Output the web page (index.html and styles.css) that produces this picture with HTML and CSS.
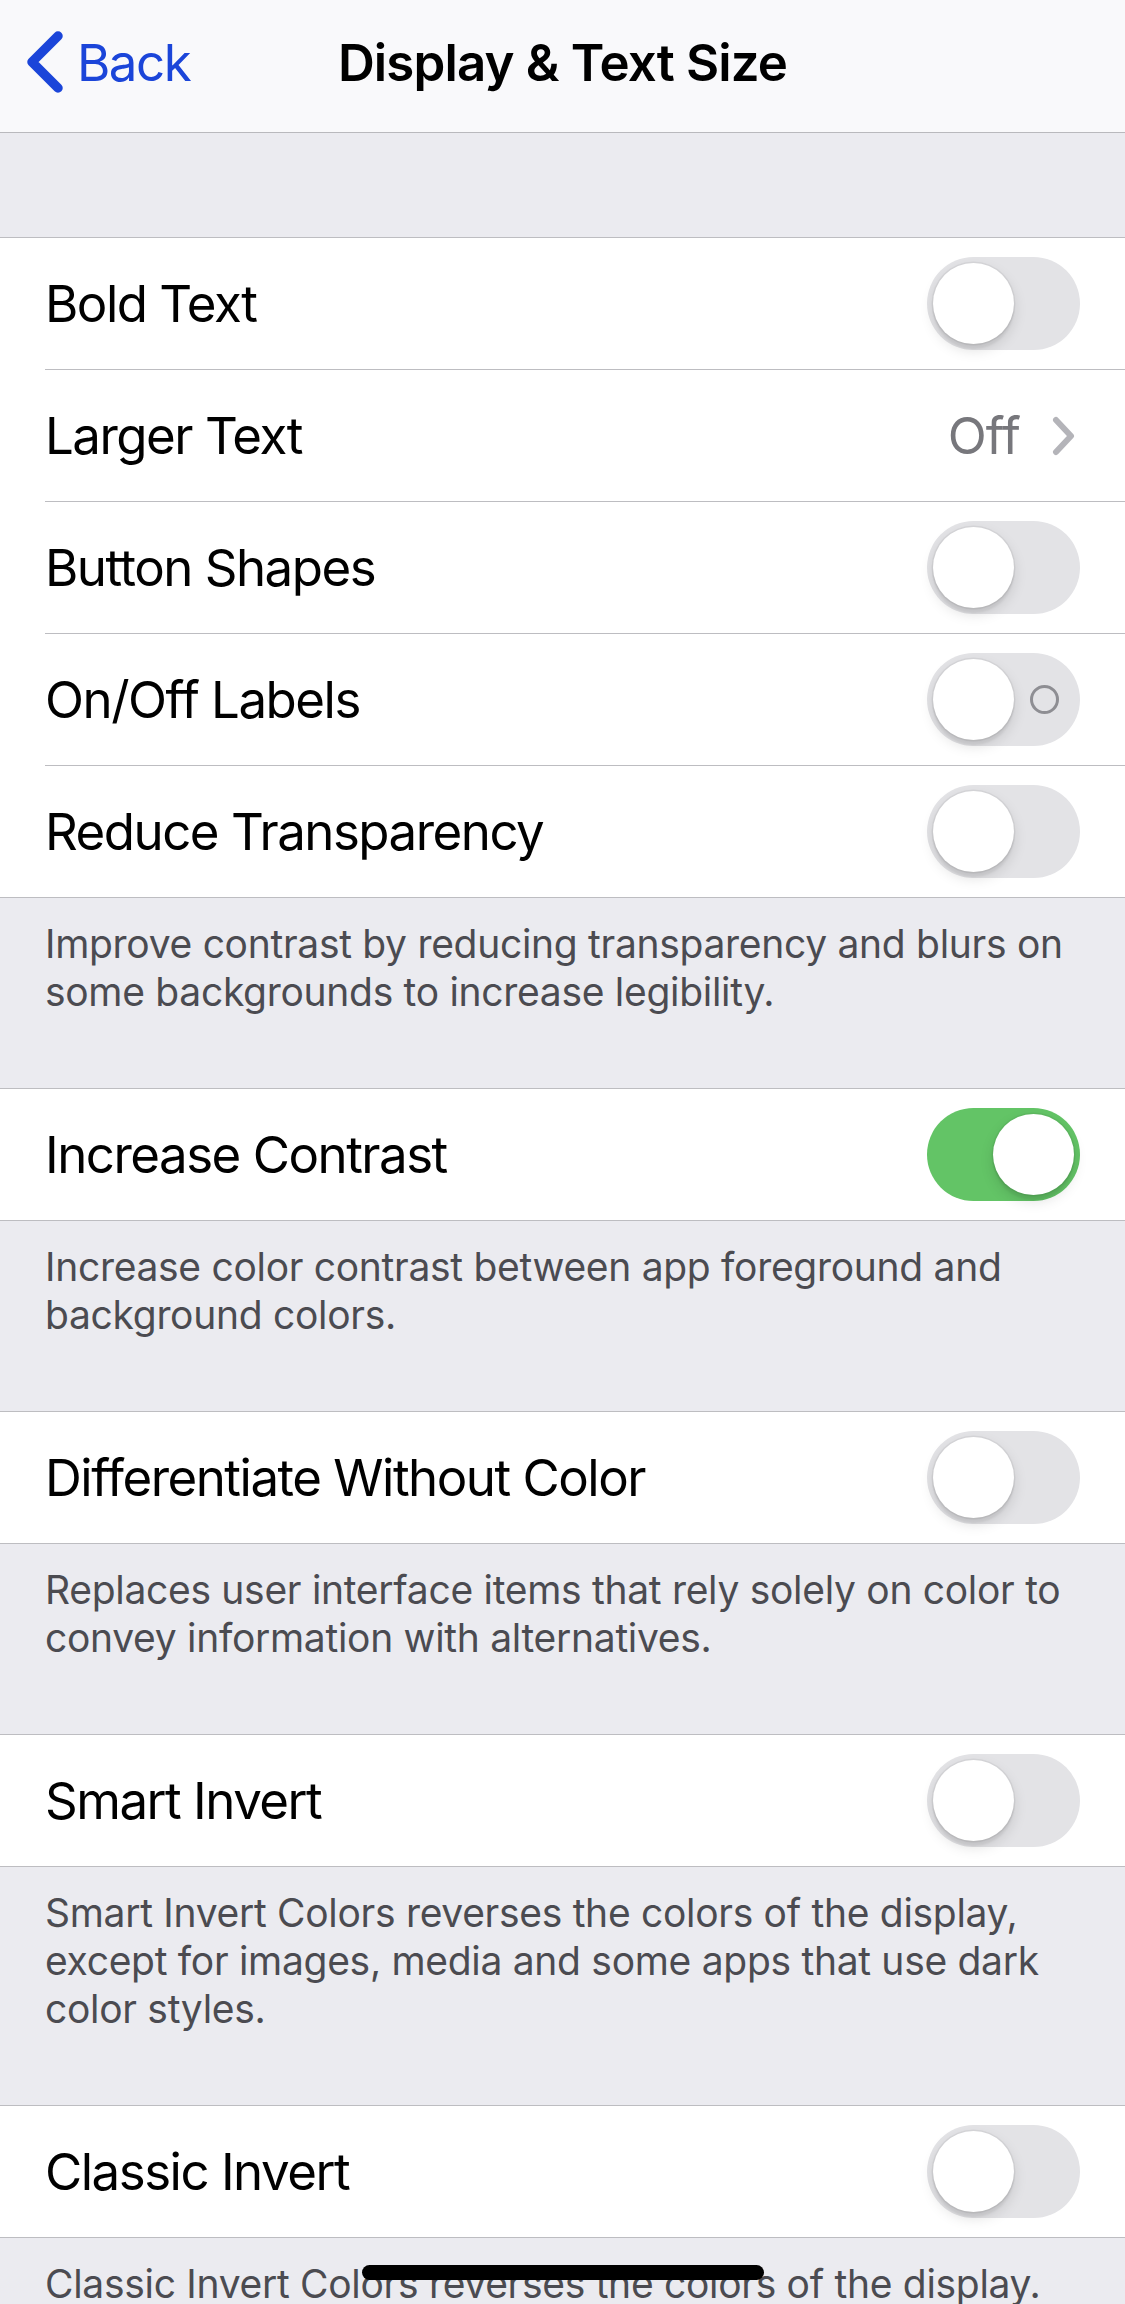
FILE: index.html
```html
<!DOCTYPE html>
<html lang="en">
<head>
<meta charset="utf-8">
<title>Display &amp; Text Size</title>
<link rel="stylesheet" href="styles.css">
</head>
<body>
<div class="screen">
  <header class="nav">
    <div class="back">
      <svg class="back-chevron" width="40" height="66" viewBox="0 0 40 66"><path d="M34 7 L8 33 L34 59" fill="none" stroke="#1b45d9" stroke-width="9.5" stroke-linecap="round" stroke-linejoin="round"/></svg>
      <span class="back-label">Back</span>
    </div>
    <h1 class="nav-title">Display &amp; Text Size</h1>
  </header>

  <div class="top-gap"></div>

  <section class="group">
    <div class="row"><span class="label">Bold Text</span><span class="toggle"><span class="knob"></span></span></div>
    <div class="row"><span class="label">Larger Text</span><span class="detail">Off</span><svg class="chevron" width="24" height="40" viewBox="0 0 24 40"><path d="M4 4 L19 20 L4 36" fill="none" stroke="#b4b4b9" stroke-width="6" stroke-linecap="round" stroke-linejoin="round"/></svg></div>
    <div class="row"><span class="label">Button Shapes</span><span class="toggle"><span class="knob"></span></span></div>
    <div class="row"><span class="label">On/Off Labels</span><span class="toggle"><span class="knob"></span><span class="ring"></span></span></div>
    <div class="row"><span class="label">Reduce Transparency</span><span class="toggle"><span class="knob"></span></span></div>
  </section>
  <p class="footer">Improve contrast by reducing transparency and blurs on some backgrounds to increase legibility.</p>

  <section class="group">
    <div class="row"><span class="label">Increase Contrast</span><span class="toggle on"><span class="knob"></span></span></div>
  </section>
  <p class="footer">Increase color contrast between app foreground and background colors.</p>

  <section class="group">
    <div class="row"><span class="label">Differentiate Without Color</span><span class="toggle"><span class="knob"></span></span></div>
  </section>
  <p class="footer">Replaces user interface items that rely solely on color to convey information with alternatives.</p>

  <section class="group">
    <div class="row"><span class="label">Smart Invert</span><span class="toggle"><span class="knob"></span></span></div>
  </section>
  <p class="footer">Smart Invert Colors reverses the colors of the display, except for images, media and some apps that use dark color styles.</p>

  <section class="group">
    <div class="row"><span class="label">Classic Invert</span><span class="toggle"><span class="knob"></span></span></div>
  </section>
  <p class="footer">Classic Invert Colors reverses the colors of the display.</p>

  <div class="home-indicator"></div>
</div>
</body>
</html>
```

FILE: styles.css
```css
* { box-sizing: border-box; }

html, body {
  margin: 0;
  padding: 0;
}

body {
  background: #ebebf0;
  font-family: "Inter", "Noto Sans", sans-serif;
  color: #000;
}

.screen {
  position: relative;
  width: 1125px;
  height: 2304px;
  overflow: hidden;
  background: #ebebf0;
}

.nav {
  height: 133px;
  background: #f9f9fb;
  border-bottom: 1px solid #b9b9bd;
  position: relative;
  display: flex;
  align-items: center;
}

.back {
  display: flex;
  align-items: center;
  padding-left: 24px;
  height: 100%;
  padding-bottom: 8px;
}

.back-chevron {
  display: block;
}

.back-label {
  font-size: 51px;
  color: #1b45d9;
  margin-left: 13px;
  letter-spacing: -1.5px;
}

.nav-title {
  position: absolute;
  left: 0;
  right: 0;
  top: 0;
  height: 124px;
  margin: 0;
  display: flex;
  align-items: center;
  justify-content: center;
  font-size: 51px;
  font-weight: 600;
  letter-spacing: -0.85px;
}

.top-gap {
  height: 104px;
}

.group {
  background: #fff;
  border-top: 1px solid #bdbdc1;
  border-bottom: 1px solid #bdbdc1;
}

.row {
  height: 131px;
  margin-left: 45px;
  padding-right: 45px;
  display: flex;
  align-items: center;
}

.row + .row {
  height: 132px;
  border-top: 1px solid #bdbdc1;
}

.label {
  flex: 1;
  font-size: 51px;
  letter-spacing: -1.5px;
}

.detail {
  font-size: 51px;
  color: #77777c;
  letter-spacing: -0.8px;
  margin-right: 32px;
}

.chevron {
  display: block;
  margin-right: 4px;
}

.toggle {
  width: 153px;
  height: 93px;
  border-radius: 47px;
  background: #e3e3e6;
  display: flex;
  align-items: center;
  padding: 6px;
}

.toggle.on {
  background: #63c466;
  justify-content: flex-end;
}

.knob {
  width: 81px;
  height: 81px;
  border-radius: 50%;
  background: #fff;
  box-shadow: 0 0 0 1.5px rgba(0, 0, 0, 0.05), 0 6px 14px rgba(0, 0, 0, 0.13), 0 5px 2px rgba(0, 0, 0, 0.05);
  flex-shrink: 0;
}

.ring {
  width: 29px;
  height: 29px;
  border-radius: 50%;
  border: 3.5px solid #8e8e93;
  margin-left: 16px;
}

.footer {
  margin: 0;
  padding: 22px 45px 72px;
  font-size: 39px;
  line-height: 48px;
  color: #4b4b51;
  letter-spacing: -0.3px;
}

.home-indicator {
  position: absolute;
  left: 362px;
  top: 2265px;
  width: 402px;
  height: 15px;
  border-radius: 8px;
  background: #000;
}
```
